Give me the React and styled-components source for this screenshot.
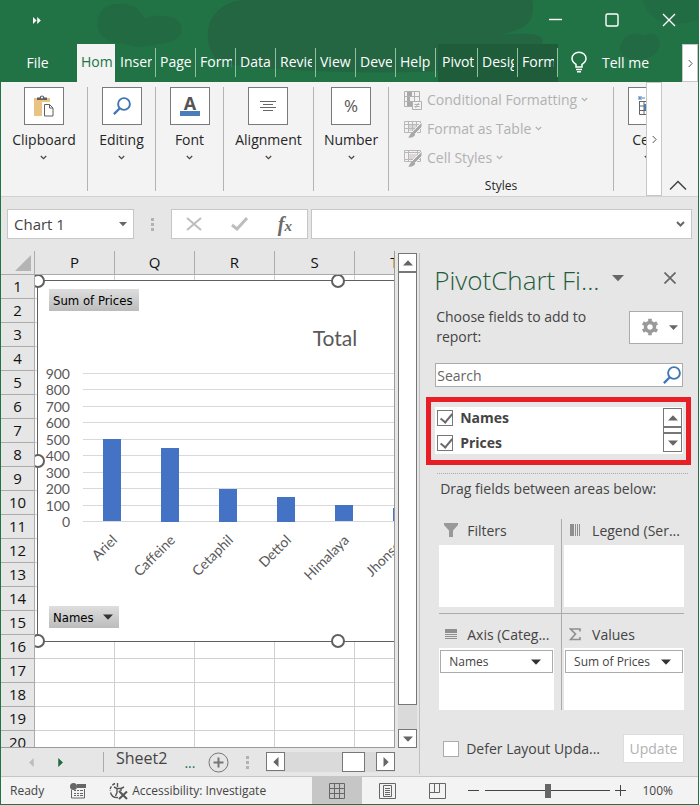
import React from "react";
import styled, { createGlobalStyle } from "styled-components";

const GREEN = "#217346";
const BLUE = "#4472c4";

const COLUMNS = ["P", "Q", "R", "S", "T"];
const ROWS = Array.from({ length: 20 }, (_, i) => i + 1);
const TABS = ["Home", "Insert", "Page Layout", "Formulas", "Data", "Review", "View", "Developer", "Help"];
const CHART_TABS = ["PivotChart Analyze", "Design", "Format"];
const TICKS = [900, 800, 700, 600, 500, 400, 300, 200, 100, 0];
const PRICES = [
  { name: "Ariel", price: 500 },
  { name: "Caffeine", price: 450 },
  { name: "Cetaphil", price: 200 },
  { name: "Dettol", price: 150 },
  { name: "Himalaya", price: 100 },
  { name: "Jhonson", price: 80 }
];

const GlobalStyle = createGlobalStyle`
  * {
    box-sizing: border-box;
  }

  body {
    margin: 0;
    background: #ffffff;
    font-family: "Open Sans", "Noto Sans", sans-serif;
    font-size: 14px;
    color: #444444;
  }

  button, input {
    font: inherit;
    color: inherit;
  }

  button {
    padding: 0;
    border: 0;
    background: none;
  }

  svg {
    display: block;
    flex: none;
  }
`;

const StyledWindow = styled.div`
  display: flex;
  flex-direction: column;
  height: 100vh;
  margin-right: 1px;
  border: 1px solid ${GREEN};
  border-top: 0;
  background: #e6e6e6;
  overflow: hidden;
`;

/* ---------- title bar and tabs ---------- */

const StyledHeader = styled.header`
  position: relative;
  flex: none;
  background: ${GREEN};
  color: #ffffff;
`;

const StyledArt = styled.svg`
  position: absolute;
  top: 0;
  left: 0;
  width: 100%;
  height: 100%;
`;

const StyledTitleBar = styled.div`
  position: relative;
  display: flex;
  align-items: center;
  justify-content: space-between;
  height: 44px;
  padding: 0 21px 4px 32px;
`;

const StyledWindowButtons = styled.div`
  display: flex;
  gap: 41px;
`;

const StyledTabRow = styled.nav`
  position: relative;
  display: flex;
  height: 38px;
`;

const StyledFileTab = styled.button`
  flex: none;
  width: 75px;
  padding: 0 2px 2px 0;
`;

const StyledTab = styled.button`
  display: flex;
  align-items: center;
  flex: none;
  width: 40px;
  padding: 4px 0 5px;
  background: ${props => (props.$dark ? "#1e5c3a" : "none")};

  span {
    flex: 1;
    height: 29px;
    padding-left: 4px;
    line-height: 27px;
    text-align: left;
    white-space: nowrap;
    overflow: hidden;
    border-right: 1px solid #8fc0a3;
  }

  b {
    display: block;
    width: 32px;
    font-weight: 400;
    overflow: hidden;
  }
`;

const StyledActiveTab = styled(StyledTab)`
  width: 38px;
  margin: 0 1px;
  background: #f3f3f3;
  color: ${GREEN};

  span {
    border: 0;
  }
`;

const StyledChartTabs = styled.div`
  display: flex;
  margin-left: 2px;
`;

const StyledTellMe = styled.button`
  display: flex;
  align-items: center;
  gap: 14px;
  flex: 1;
  padding: 0 0 2px 12px;
`;

const StyledScrollTabs = styled.button`
  display: flex;
  align-items: center;
  justify-content: center;
  width: 16px;
  background: #ffffff;
  border: 1px solid #c6c6c6;
`;

/* ---------- ribbon ---------- */

const StyledRibbon = styled.section`
  display: flex;
  flex: none;
  height: 115px;
  background: #f3f3f3;
  border-bottom: 1px solid #d2d2d2;
`;

const StyledGroups = styled.div`
  display: flex;
  flex: 1;
  min-width: 0;
  overflow: hidden;
  padding: 5px 0;
`;

const StyledGroup = styled.div`
  display: flex;
  flex-direction: column;
  align-items: center;
  flex: 0 0 ${props => props.$width}px;
  border-right: 1px solid #b4b4b4;
  color: #262626;
`;

const StyledGroupButton = styled.button`
  display: flex;
  flex-direction: column;
  align-items: center;
  gap: 5px;

  > svg {
    margin-top: 1px;
  }
`;

const StyledIconBox = styled.span`
  display: flex;
  align-items: center;
  justify-content: center;
  width: 40px;
  height: 38px;
  background: #ffffff;
  border: 1px solid #7a7a7a;
`;

const StyledStyles = styled(StyledGroup)`
  align-items: stretch;
`;

const StyledStyleButton = styled.button`
  display: flex;
  align-items: center;
  gap: 4px;
  flex: none;
  height: 29px;
  padding: 0 0 4px 14px;
  color: #b1b1b1;
  white-space: nowrap;
`;

const StyledGroupTitle = styled.span`
  margin-top: 2px;
  line-height: 20px;
  font-size: 12px;
  text-align: center;
`;

const StyledRibbonEnd = styled.div`
  display: flex;
  align-items: flex-end;
  justify-content: center;
  width: 36px;
  padding: 0 4px 5px 0;
`;

/* ---------- formula bar ---------- */

const StyledFormulaBar = styled.div`
  display: flex;
  align-items: center;
  flex: none;
  height: 54px;
  padding: 0 6px;
`;

const StyledField = styled.div`
  display: flex;
  align-items: center;
  width: ${props => (props.$width ? props.$width + "px" : "auto")};
  flex: ${props => (props.$width ? "none" : "1")};
  height: 30px;
  padding: 0 6px;
  background: #ffffff;
  border: 1px solid #c6c6c6;

  input {
    flex: 1;
    min-width: 0;
    width: 100%;
    padding: 0;
    border: 0;
    outline: 0;
    background: none;
    font-size: 15px;
    color: #444444;
  }
`;

const StyledDots = styled.span`
  display: flex;
  flex-direction: column;
  gap: 2px;
  margin: 0 ${props => props.$space}px;

  i {
    width: 3px;
    height: 3px;
    background: #b1b1b1;
  }
`;

const StyledFunctions = styled(StyledField)`
  justify-content: space-between;
  margin-right: 3px;
  padding: 0 15px 0 14px;
`;

const StyledFx = styled.span`
  font: italic bold 20px "Liberation Serif", serif;
  color: #6a6a6a;

  small {
    font-size: 15px;
  }
`;

/* ---------- sheet ---------- */

const StyledWork = styled.main`
  display: flex;
  flex: 1;
  min-height: 0;
`;

const StyledSheetSide = styled.section`
  display: flex;
  flex-direction: column;
  flex: 1;
  min-width: 0;
`;

const StyledSheetRow = styled.div`
  display: flex;
  gap: 3px;
  flex: 1;
  min-height: 0;
`;

const StyledSheet = styled.div`
  position: relative;
  flex: 1;
  min-width: 0;
  overflow: hidden;
  border-right: 1px solid #9b9b9b;
  border-bottom: 1px solid #9b9b9b;
`;

const StyledTable = styled.table`
  width: 434px;
  table-layout: fixed;
  border-spacing: 0;
  font-size: 15px;
  color: #111111;

  th {
    height: 24px;
    padding: 0;
    line-height: 23px;
    font-weight: 400;
    background: #e6e6e6;
    border-right: 1px solid #ababab;
    border-bottom: 1px solid #ababab;
  }

  td {
    padding: 0;
    background: #ffffff;
    border-right: 1px solid #d0d0d0;
    border-bottom: 1px solid #d0d0d0;
  }

  th:first-child {
    width: 34px;
  }

  thead th:first-child svg {
    margin: 1px 0 0 14px;
  }
`;

const StyledCanvas = styled.div`
  position: absolute;
  top: 24px;
  left: 34px;
  right: 0;
  bottom: 0;
  overflow: hidden;
`;

const StyledChart = styled.figure`
  position: absolute;
  top: 5px;
  left: 2px;
  width: 602px;
  height: 362px;
  margin: 0;
  padding: 8px 11px;
  background: #ffffff;
  border: 1px solid #606060;

  > svg {
    overflow: visible;
  }
`;

const StyledHandle = styled.i`
  position: absolute;
  top: ${props => props.$top};
  left: ${props => props.$left};
  width: 14px;
  height: 14px;
  margin: -7px;
  background: #ffffff;
  border: 2px solid #606060;
  border-radius: 50%;
`;

const StyledFieldButton = styled.button`
  display: flex;
  align-items: center;
  gap: 9px;
  height: 22px;
  padding: 0 6px 0 4px;
  font: 13px "DejaVu Sans Condensed", "Noto Sans", sans-serif;
  color: #000000;
  background: linear-gradient(#dedede, #bcbcbc);
`;

const StyledScroll = styled.div`
  display: flex;
  flex-direction: ${props => (props.$vertical ? "column" : "row")};
  flex: none;
  background: #dadada;
`;

const StyledVerticalScroll = styled(StyledScroll)`
  width: 19px;
  margin: 2px 2px 0 0;
`;

const StyledHorizontalScroll = styled(StyledScroll)`
  flex: 1;
  height: 20px;
  margin-right: 24px;
`;

const StyledScrollButton = styled.button`
  display: flex;
  align-items: center;
  justify-content: center;
  flex: none;
  width: 19px;
  height: 19px;
  background: #ffffff;
  border: 1px solid #777777;
`;

const StyledThumb = styled.span`
  flex: ${props => props.$grow};
  background: #ffffff;
  border: 1px solid #777777;
`;

const StyledGap = styled.span`
  flex: ${props => props.$grow};
`;

const StyledSheetTabs = styled.div`
  display: flex;
  align-items: center;
  flex: none;
  height: 28px;
  padding-left: 26px;
`;

const StyledSheetTab = styled.button`
  height: 20px;
  margin: 0 17px 0 38px;
  padding: 0 0 8px 12px;
  border-left: 1px solid #ababab;
  line-height: 12px;
  font-size: 16px;
`;

const StyledMore = styled.span`
  margin-right: 13px;
  color: ${GREEN};
`;

/* ---------- task pane ---------- */

const StyledPane = styled.aside`
  display: flex;
  flex-direction: column;
  flex: 0 0 40%;
  max-width: 279px;
  margin: 2px 0 2px;
  padding: 12px 7px 0 6px;
  border-left: 1px solid #c0c0c0;
`;

const StyledPaneTitle = styled.div`
  display: flex;
  align-items: center;
  height: 30px;
  padding: 0 15px 0 8px;

  h2 {
    margin: 0 12px 0 0;
    font-size: 26px;
    font-weight: 300;
    line-height: 30px;
    color: #1e5c3a;
    white-space: nowrap;
  }

  button {
    padding-bottom: 4px;
  }

  button:last-child {
    margin-left: auto;
  }
`;

const StyledChoose = styled.div`
  display: flex;
  justify-content: space-between;
  align-items: center;
  margin-top: 12px;
  padding: 0 8px 0 10px;

  p {
    width: 170px;
    margin: 0;
    line-height: 20px;
  }
`;

const StyledGearButton = styled.button`
  display: flex;
  align-items: center;
  justify-content: space-between;
  width: 54px;
  height: 33px;
  padding: 0 4px 0 11px;
  background: #ffffff;
  border: 1px solid #ababab;
`;

const StyledSearch = styled.label`
  display: flex;
  align-items: center;
  height: 24px;
  margin: 16px 8px 10px 9px;
  padding: 0 1px;
  background: #ffffff;
  border: 1px solid #ababab;

  input {
    flex: 1;
    min-width: 0;
    padding: 0;
    border: 0;
    outline: 0;
    background: none;
  }

  input::placeholder {
    color: #666666;
    opacity: 1;
  }
`;

const StyledFieldList = styled.div`
  padding: 5px 3px 6px 4px;
  border: 5px solid #e81e27;
`;

const StyledFieldBox = styled.div`
  display: flex;
  justify-content: space-between;
  height: 47px;
  padding: 1px 1px 2px 2px;
  background: #ffffff;

  ul {
    display: flex;
    flex-direction: column;
    gap: 5px;
    margin: 0;
    padding: 0;
    list-style: none;
  }

  li {
    height: 20px;
    line-height: 20px;
    font-weight: 700;
  }
`;

const StyledCheckLabel = styled.label`
  display: flex;
  align-items: center;
  gap: 7px;
  white-space: nowrap;
`;

const StyledCheckbox = styled.input`
  appearance: none;
  flex: none;
  width: 16px;
  height: 16px;
  margin: 0;
  background: #ffffff;
  border: 1px solid ${props => (props.$muted ? "#ababab" : "#777777")};

  &:checked::after {
    content: "";
    display: block;
    width: 5px;
    height: 10px;
    margin: 0 0 0 5px;
    border: solid #6a6a6a;
    border-width: 0 2px 2px 0;
    transform: rotate(40deg);
  }
`;

const StyledDrag = styled.p`
  margin: 8px 3px 20px 11px;
  padding: 5px 0 0 3px;
  border-top: 1px dotted #ababab;
  line-height: 20px;
`;

const StyledAreas = styled.div`
  display: grid;
  grid-template-columns: 122fr 123fr;
  margin: 0 7px 24px 13px;
`;

const StyledArea = styled.section`
  display: flex;
  flex-direction: column;
  min-width: 0;
  padding: ${props => (props.$right ? "0 0 0 2px" : "0 7px 0 0")};
  border-left: ${props => (props.$right ? "1px solid #ababab" : "0")};

  h3 {
    display: flex;
    align-items: center;
    gap: 9px;
    height: 22px;
    margin: ${props => (props.$lower ? "9px 0 3px" : "0 0 4px")};
    padding-left: 5px;
    font-size: 14px;
    font-weight: 400;
    white-space: nowrap;
  }
`;

const StyledRule = styled.hr`
  grid-column: 1 / -1;
  width: 100%;
  height: 1px;
  margin: 0;
  border: 0;
  background: #ababab;
`;

const StyledDropBox = styled.div`
  height: 62px;
  margin-bottom: ${props => (props.$spaced ? "6px" : "0")};
  padding: 2px 1px;
  background: #ffffff;
`;

const StyledPill = styled.button`
  display: flex;
  align-items: center;
  justify-content: space-between;
  width: 100%;
  height: 23px;
  padding: 0 11px 0 8px;
  font-size: 12px;
  white-space: nowrap;
  background: #ffffff;
  border: 1px solid #ababab;
`;

const StyledPaneFoot = styled.div`
  display: flex;
  align-items: center;
  justify-content: space-between;
  padding: 0 7px 0 17px;
`;

const StyledUpdate = styled.button`
  width: 61px;
  height: 29px;
  background: #ffffff;
  border: 1px solid #dddddd;
  color: #b1b1b1;
`;

/* ---------- status bar ---------- */

const StyledStatus = styled.footer`
  display: flex;
  align-items: center;
  flex: none;
  height: 28px;
  padding: 0 25px 0 9px;
  background: #f3f3f3;
  border-top: 1px solid #c6c6c6;
  font-size: 12px;
`;

const StyledMacro = styled.button`
  margin: 0 23px 0 26px;
`;

const StyledAccessibility = styled.button`
  display: flex;
  align-items: center;
  gap: 3px;
  margin-right: auto;
  white-space: nowrap;
`;

const StyledView = styled.button`
  display: flex;
  align-items: center;
  justify-content: center;
  align-self: stretch;
  width: 50px;
  background: ${props => (props.$active ? "#c6c6c6" : "none")};
`;

const StyledZoom = styled.input`
  appearance: none;
  width: 125px;
  height: 14px;
  margin: 0 5px 0 6px;
  background: linear-gradient(#444444, #444444) center / 100% 1px no-repeat;

  &::-webkit-slider-thumb {
    appearance: none;
    width: 6px;
    height: 14px;
    background: #666666;
  }
`;

const StyledPercent = styled.output`
  margin-left: 16px;
`;

export default function App() {
  return (
    <StyledWindow>
      <GlobalStyle />
      {renderHeader()}
      {renderRibbon()}
      {renderFormulaBar()}
      <StyledWork>
        {renderSheetSide()}
        {renderPane()}
      </StyledWork>
      {renderStatus()}
    </StyledWindow>
  );
}

function Chevron({ color = "#444444" }) {
  return (
    <svg width="7" height="5" viewBox="0 0 7 5" fill="none" stroke={color} strokeWidth="1.2">
      <path d="M.8 1l2.7 2.6L6.2 1" />
    </svg>
  );
}

function Caret({ size = 10, color = "#666666", turn = 0 }) {
  return (
    <svg width={size} height={size} viewBox="0 0 10 10" fill={color}>
      <path d="M0 2.5h10L5 7.7z" transform={`rotate(${turn} 5 5)`} />
    </svg>
  );
}

function RightChevron() {
  return (
    <svg width="5" height="9" viewBox="0 0 5 9" fill="none" stroke="#555555">
      <path d="M.7 1l3.4 3.5L.7 8" />
    </svg>
  );
}

function Magnifier({ size }) {
  return (
    <svg width={size} height={size} viewBox="0 0 18 18" fill="none" stroke="#3f76b5" strokeWidth="1.9">
      <circle cx="11" cy="7" r="5.9" />
      <path d="M6.8 11.2L.9 17.1" strokeWidth="2.3" />
    </svg>
  );
}

function renderHeader() {
  return (
    <StyledHeader>
      <StyledArt viewBox="0 0 698 82" preserveAspectRatio="none" fill="#236641">
        <path d="M97 26C96 8 108 3 122 4c14 1 18 8 22 15 12-7 36-3 37 8 1 12-12 17-24 17-12 4-22 3-34 0-14-1-25-6-26-18z" opacity=".65" />
        <path d="M208 26C214 8 230 0 244 0h288c4 22-8 30-30 34 14 1 44-4 40 9-10 14-40 9-50 22-30 12-250 8-275-4-8-8-12-22-9-35z" />
        <path d="M620 50c0-14 12-20 24-14 8-6 20 0 14 14-4 12-36 14-38 0z" opacity=".7" />
        <path d="M642 0c8 24 30 28 56 20V0z" opacity=".5" />
      </StyledArt>
      <StyledTitleBar>
        <svg width="8" height="7" viewBox="0 0 8 7" fill="#ffffff">
          <path d="M0 0l3.6 3.5L0 7zM4.2 0l3.6 3.5L4.2 7z" />
        </svg>
        <StyledWindowButtons>
          <button aria-label="Minimize">
            <svg width="16" height="16" stroke="#ffffff" strokeWidth="1.4">
              <path d="M2 7.5h13" />
            </svg>
          </button>
          <button aria-label="Maximize">
            <svg width="16" height="16" fill="none" stroke="#ffffff" strokeWidth="1.4">
              <rect x="2" y="2" width="12" height="12" rx="1.5" />
            </svg>
          </button>
          <button aria-label="Close">
            <svg width="16" height="16" stroke="#ffffff" strokeWidth="1.4">
              <path d="M2 2l12 12M14 2L2 14" />
            </svg>
          </button>
        </StyledWindowButtons>
      </StyledTitleBar>
      <StyledTabRow>
        <StyledFileTab>File</StyledFileTab>
        {TABS.map((tab, i) => {
          const Tab = i === 0 ? StyledActiveTab : StyledTab;
          return (
            <Tab key={tab}>
              <span>
                <b>{tab}</b>
              </span>
            </Tab>
          );
        })}
        <StyledChartTabs>
          {CHART_TABS.map(tab => (
            <StyledTab key={tab} $dark>
              <span>
                <b>{tab}</b>
              </span>
            </StyledTab>
          ))}
        </StyledChartTabs>
        <StyledTellMe>
          <svg width="18" height="22" viewBox="0 0 18 22" fill="none" stroke="#ffffff" strokeWidth="1.5">
            <path d="M6 16v-2.6C3.4 11.8 2 9.8 2 7.6 2 3.9 5.1 1.200 9 1.200s7 2.7 7 6.4c0 2.200-1.400 4.200-4 5.800V16zM6 18.500h6M7 20.800h4" />
          </svg>
          Tell me
        </StyledTellMe>
        <StyledScrollTabs aria-label="More tabs">
          <RightChevron />
        </StyledScrollTabs>
      </StyledTabRow>
    </StyledHeader>
  );
}

function renderGroup(label, width, icon) {
  return (
    <StyledGroup $width={width}>
      <StyledGroupButton>
        <StyledIconBox>{icon}</StyledIconBox>
        {label}
        <Chevron />
      </StyledGroupButton>
    </StyledGroup>
  );
}

function renderRibbon() {
  return (
    <StyledRibbon>
      <StyledGroups>
        {renderGroup(
          "Clipboard",
          87,
          <svg width="20" height="22" viewBox="0 0 20 22">
            <path d="M0 3h16v18H0z" fill="#eac282" />
            <path d="M3 5V2.5h2.500a2.600 2.600 0 0 1 5 0H13V5z" fill="#606060" />
            <circle cx="8" cy="2.6" r="1" fill="#ffffff" />
            <path d="M9.5 8.5h6.500l3.500 3.500v9h-10z" fill="#ffffff" stroke="#ffffff" strokeWidth="3" />
            <path d="M10.5 9.5h5l3.500 3.500v8h-8.500zM15.500 9.500V13H19" fill="#ffffff" stroke="#606060" />
          </svg>
        )}
        {renderGroup("Editing", 68, <Magnifier size={18} />)}
        {renderGroup(
          "Font",
          68,
          <svg width="20" height="22" viewBox="0 0 20 22">
            <text x="10" y="15" textAnchor="middle" fontSize="18" fontWeight="700" fill="#555555">
              A
            </text>
            <path d="M0 16h20v5H0z" fill="#4a7ebb" />
          </svg>
        )}
        {renderGroup(
          "Alignment",
          90,
          <svg width="16" height="12" stroke="#666666">
            <path d="M0 1.5h16M3 4.5h10M0 7.5h16M3 10.5h10" />
          </svg>
        )}
        {renderGroup(
          "Number",
          75,
          <svg width="20" height="20">
            <text x="10" y="16" textAnchor="middle" fontSize="17" fill="#555555">
              %
            </text>
          </svg>
        )}
        <StyledStyles $width={225}>
          <StyledStyleButton disabled>
            <svg width="20" height="20" viewBox="0 0 20 20" fill="none" stroke="#b1b1b1">
              <path d="M1.5 1.5h15v15h-15zM1.5 6.5h15M1.5 11.5h15M6.5 1.5v15M11.5 1.5v15" />
              <path d="M4 2h5v4H4zM4 7h3v4H4zM4 12h5v4H4z" fill="#a8a8a8" stroke="none" />
              <path d="M9.5 11.5h9v8h-9z" fill="#f3f3f3" />
              <path d="M11.5 14.5h5M11.5 16.5h5M15.5 13l-3 5" />
            </svg>
            Conditional Formatting
            <Chevron color="#b1b1b1" />
          </StyledStyleButton>
          <StyledStyleButton disabled>
            {renderBrushTable("M1.5 5.5h16M1.5 9.5h16M5.5 2.5v11M9.5 2.5v11M13.5 2.5v11")}
            Format as Table
            <Chevron color="#b1b1b1" />
          </StyledStyleButton>
          <StyledStyleButton disabled>
            {renderBrushTable("M1.5 4.5h16M1.5 11.5h16M5.5 2.5v11M14.5 2.5v11")}
            Cell Styles
            <Chevron color="#b1b1b1" />
          </StyledStyleButton>
          <StyledGroupTitle>Styles</StyledGroupTitle>
        </StyledStyles>
        {renderGroup(
          "Cells",
          68,
          <svg width="20" height="22" viewBox="0 0 20 22" fill="none" stroke="#666666">
            <path d="M1.5 6v13.500h17V6M1.500 6.500h17M1.500 11h17M1.500 15.500h17M6 6v13.500M14 6v13.500" />
            <path d="M6 9h8v6H6z" fill="#4a7ebb" stroke="none" />
            <path d="M1 1v4M1 3h6M3.500 1L1.500 3l2 2" stroke="#4a7ebb" />
          </svg>
        )}
      </StyledGroups>
      <StyledScrollTabs aria-label="Scroll ribbon">
        <RightChevron />
      </StyledScrollTabs>
      <StyledRibbonEnd>
        <button aria-label="Collapse the ribbon">
          <svg width="18" height="11" fill="none" stroke="#444444" strokeWidth="1.5">
            <path d="M1 9.5L9 1.500l8 8" />
          </svg>
        </button>
      </StyledRibbonEnd>
    </StyledRibbon>
  );
}

function renderBrushTable(lines) {
  return (
    <svg width="20" height="20" viewBox="0 0 20 20" fill="none" stroke="#b8b8b8">
      <path d="M5 6h9v6H5z" fill="#dcd6dc" stroke="none" />
      <path d="M1.5 2.5h16v11h-16z" />
      <path d={lines} />
      <path d="M19 3v5l-7 7-3-2z" fill="#a8a8a8" stroke="#f3f3f3" />
      <path d="M9.5 13c2 0 3 1.500 2.500 3-1 2-3.500 3-7 2.500C7 17.500 7 14 9.500 13z" fill="#a8a8a8" stroke="none" />
    </svg>
  );
}

function renderDots(space) {
  return (
    <StyledDots $space={space}>
      <i />
      <i />
      <i />
    </StyledDots>
  );
}

function renderFormulaBar() {
  return (
    <StyledFormulaBar>
      <StyledField $width={127}>
        <input aria-label="Name box" defaultValue="Chart 1" />
        <Caret size={8} />
      </StyledField>
      {renderDots(17)}
      <StyledFunctions $width={137}>
        <button aria-label="Cancel">
          <svg width="16" height="14" stroke="#bdbdbd" strokeWidth="2">
            <path d="M1 1l14 12M15 1L1 13" />
          </svg>
        </button>
        <button aria-label="Enter">
          <svg width="17" height="14" fill="none" stroke="#bdbdbd" strokeWidth="3">
            <path d="M1 8l5 4L16 1" />
          </svg>
        </button>
        <button aria-label="Insert function">
          <StyledFx>
            f<small>x</small>
          </StyledFx>
        </button>
      </StyledFunctions>
      <StyledField>
        <input aria-label="Formula" />
        <svg width="9" height="7" fill="none" stroke="#666666" strokeWidth="2">
          <path d="M1 1l3.5 3.5L8 1" />
        </svg>
      </StyledField>
    </StyledFormulaBar>
  );
}

function renderSheetSide() {
  return (
    <StyledSheetSide>
      <StyledSheetRow>
        <StyledSheet>
          <StyledTable>
            <thead>
              <tr>
                <th aria-label="Select all">
                  <svg width="16" height="16" fill="#b4b4b4">
                    <path d="M16 0v16H0z" />
                  </svg>
                </th>
                {COLUMNS.map(column => (
                  <th key={column}>{column}</th>
                ))}
              </tr>
            </thead>
            <tbody>
              {ROWS.map(row => (
                <tr key={row}>
                  <th>{row}</th>
                  {COLUMNS.map(column => (
                    <td key={column} />
                  ))}
                </tr>
              ))}
            </tbody>
          </StyledTable>
          <StyledCanvas>{renderChart()}</StyledCanvas>
        </StyledSheet>
        <StyledVerticalScroll $vertical>
          <StyledScrollButton aria-label="Scroll up">
            <Caret turn={180} />
          </StyledScrollButton>
          <StyledThumb $grow={18} />
          <StyledGap $grow={1} />
          <StyledScrollButton aria-label="Scroll down">
            <Caret />
          </StyledScrollButton>
        </StyledVerticalScroll>
      </StyledSheetRow>
      <StyledSheetTabs>
        <button aria-label="Previous sheet">
          <Caret turn={90} size={9} color="#bdbdbd" />
        </button>
        <StyledGap $grow="0 0 20px" />
        <button aria-label="Next sheet">
          <Caret turn={-90} size={9} color="#1e6b3f" />
        </button>
        <StyledSheetTab>Sheet2</StyledSheetTab>
        <StyledMore>...</StyledMore>
        <button aria-label="New sheet">
          <svg width="21" height="21" fill="none" stroke="#777777">
            <circle cx="10.5" cy="10.5" r="9.5" />
            <path d="M10.5 5.5v10M5.5 10.5h10" strokeWidth="2" />
          </svg>
        </button>
        {renderDots(17)}
        <StyledHorizontalScroll>
          <StyledScrollButton aria-label="Scroll left">
            <Caret turn={90} />
          </StyledScrollButton>
          <StyledGap $grow={57} />
          <StyledThumb $grow={21} />
          <StyledGap $grow={11} />
          <StyledScrollButton aria-label="Scroll right">
            <Caret turn={-90} />
          </StyledScrollButton>
        </StyledHorizontalScroll>
      </StyledSheetTabs>
    </StyledSheetSide>
  );
}

function renderChart() {
  const base = 210.5;
  const scale = 148 / 900;

  return (
    <StyledChart>
      <StyledFieldButton>Sum of Prices</StyledFieldButton>
      <svg width="578" height="295" fontFamily="Lato, sans-serif" fontSize="14" fill="#595959">
        <text x="286" y="35" fontSize="21" textAnchor="middle">
          Total
        </text>
        {TICKS.map(tick => {
          const y = Math.floor(base - tick * scale) + 0.5;
          return (
            <g key={tick}>
              <text x="21" y={y + 5} textAnchor="end">
                {tick}
              </text>
              <path d={`M34 ${y}h540`} stroke="#d9d9d9" />
            </g>
          );
        })}
        {PRICES.map((item, i) => (
          <g key={item.name}>
            <rect
              x={54 + i * 58}
              y={Math.round(base - item.price * scale)}
              width="18"
              height={Math.round(item.price * scale)}
              fill={BLUE}
            />
            <text textAnchor="end" transform={`translate(${69 + i * 58} 230) rotate(-45)`}>
              {item.name}
            </text>
          </g>
        ))}
      </svg>
      <StyledFieldButton>
        Names
        <Caret color="#333333" />
      </StyledFieldButton>
      <StyledHandle $top="0" $left="0" />
      <StyledHandle $top="0" $left="50%" />
      <StyledHandle $top="50%" $left="0" />
      <StyledHandle $top="100%" $left="0" />
      <StyledHandle $top="100%" $left="50%" />
    </StyledChart>
  );
}

function renderArea({ title, icon, field, right, lower }) {
  return (
    <StyledArea $right={right} $lower={lower}>
      <h3>
        {icon}
        {title}
      </h3>
      <StyledDropBox $spaced={!lower}>
        {field && (
          <StyledPill>
            {field}
            <Caret color="#333333" />
          </StyledPill>
        )}
      </StyledDropBox>
    </StyledArea>
  );
}

function renderPane() {
  return (
    <StyledPane>
      <StyledPaneTitle>
        <h2>PivotChart Fi...</h2>
        <button aria-label="Pane options">
          <Caret size={12} />
        </button>
        <button aria-label="Close pane">
          <svg width="12" height="12" stroke="#666666" strokeWidth="1.7">
            <path d="M.5.5l11 11M11.5.5l-11 11" />
          </svg>
        </button>
      </StyledPaneTitle>
      <StyledChoose>
        <p>Choose fields to add to report:</p>
        <StyledGearButton aria-label="Tools">
          <svg width="18" height="18" viewBox="-9 -9 18 18" fill="none" stroke="#999999">
            <circle r="4.5" strokeWidth="3.4" />
            <path
              d="M0-5.500V-8.200M0 5.500v2.700M4.800-2.700l2.300-1.400M-4.800 2.700l-2.300 1.400M4.800 2.700l2.300 1.400M-4.800-2.700l-2.300-1.400"
              strokeWidth="3.6"
            />
          </svg>
          <Caret size={9} />
        </StyledGearButton>
      </StyledChoose>
      <StyledSearch>
        <input placeholder="Search" aria-label="Search fields" />
        <Magnifier size={18} />
      </StyledSearch>
      <StyledFieldList>
        <StyledFieldBox>
          <ul>
            {["Names", "Prices"].map(name => (
              <li key={name}>
                <StyledCheckLabel>
                  <StyledCheckbox type="checkbox" defaultChecked />
                  {name}
                </StyledCheckLabel>
              </li>
            ))}
          </ul>
          <StyledScroll $vertical>
            <StyledScrollButton aria-label="Scroll fields up">
              <Caret turn={180} />
            </StyledScrollButton>
            <StyledThumb $grow={1} />
            <StyledScrollButton aria-label="Scroll fields down">
              <Caret />
            </StyledScrollButton>
          </StyledScroll>
        </StyledFieldBox>
      </StyledFieldList>
      <StyledDrag>Drag fields between areas below:</StyledDrag>
      <StyledAreas>
        {renderArea({
          title: "Filters",
          icon: (
            <svg width="14" height="14" fill="#999999">
              <path d="M0 0h14v2L9 7.5V14H5V7.500L0 2z" />
            </svg>
          )
        })}
        {renderArea({
          title: "Legend (Ser...",
          right: true,
          icon: (
            <svg width="14" height="12" fill="#8f8f8f">
              <path d="M1 0h4v12H1zM6 0h1v12H6zM8 0h1v12H8zM10 0h1v12h-1z" />
            </svg>
          )
        })}
        <StyledRule />
        {renderArea({
          title: "Axis (Categ...",
          field: "Names",
          lower: true,
          icon: (
            <svg width="14" height="11" fill="#8f8f8f">
              <path d="M1 0h12v4H1zM1 5h12v1H1zM1 7h12v1H1zM1 9h12v1H1z" />
            </svg>
          )
        })}
        {renderArea({
          title: "Values",
          field: "Sum of Prices",
          right: true,
          lower: true,
          icon: (
            <svg width="14" height="13" fill="none" stroke="#8f8f8f" strokeWidth="1.6">
              <path d="M11 3.5V1H1.500l5 5-5 5.500H11V9" />
            </svg>
          )
        })}
      </StyledAreas>
      <StyledPaneFoot>
        <StyledCheckLabel>
          <StyledCheckbox type="checkbox" $muted />
          Defer Layout Upda...
        </StyledCheckLabel>
        <StyledUpdate disabled>Update</StyledUpdate>
      </StyledPaneFoot>
    </StyledPane>
  );
}

function renderStatus() {
  return (
    <StyledStatus>
      Ready
      <StyledMacro aria-label="Record macro">
        <svg width="16" height="16" fill="#666666">
          <path d="M7 1h9v4H7z" />
          <path d="M1.5 7v8h13V6" fill="none" stroke="#666666" />
          <circle cx="3.5" cy="3.5" r="3.5" />
          <path d="M4 7h2v1H4zM7 7h2v1H7zM10 7h3v1h-3zM4 10h2v1H4zM7 10h2v1H7zM10 10h3v1h-3zM4 12h2v1H4zM7 12h2v1H7zM10 12h3v1h-3z" />
        </svg>
      </StyledMacro>
      <StyledAccessibility>
        <svg width="20" height="18" viewBox="0 0 20 18" fill="none" stroke="#555555">
          <path d="M6 1.5C2.500 3 .8 6 1.200 9" strokeWidth="1.4" strokeDasharray="3 1.5" />
          <path d="M1.5 10.5C2.500 14 5 16 9 15.500" strokeWidth="1.4" />
          <path d="M5 5l3 1.500v4L6.500 14M8 6.500h4L15 5M8.500 1v4M12 7v2" strokeWidth="1.4" />
          <path d="M10 9l8 8M18 9.5L10 17" strokeWidth="2" />
        </svg>
        Accessibility: Investigate
      </StyledAccessibility>
      <StyledView $active aria-label="Normal view">
        <svg width="16" height="16" fill="none" stroke="#666666">
          <path d="M.5.5h15v15H.5zM.5 5.5h15M.5 10.5h15M5.5.5v15M10.5.5v15" />
        </svg>
      </StyledView>
      <StyledView aria-label="Page layout view">
        <svg width="17" height="16" fill="none" stroke="#666666">
          <path d="M.5.5h16v15H.5zM4.5 2.5h8v11h-8zM6 5.5h5M6 7.5h5M6 9.5h5M6 11.5h5" />
        </svg>
      </StyledView>
      <StyledView aria-label="Page break view">
        <svg width="17" height="16" fill="none" stroke="#666666">
          <path d="M.5.5h16v15H.5zM.5 9.5h10M5.5.5v9M10.5.5v9" />
        </svg>
      </StyledView>
      <StyledGap $grow="0 0 6px" />
      <button aria-label="Zoom out">
        <svg width="11" height="11" stroke="#444444">
          <path d="M0 5.5h11" />
        </svg>
      </button>
      <StyledZoom type="range" aria-label="Zoom" min="10" max="190" defaultValue="100" />
      <button aria-label="Zoom in">
        <svg width="11" height="11" stroke="#444444">
          <path d="M0 5.5h11M5.5 0v11" />
        </svg>
      </button>
      <StyledPercent>100%</StyledPercent>
    </StyledStatus>
  );
}
